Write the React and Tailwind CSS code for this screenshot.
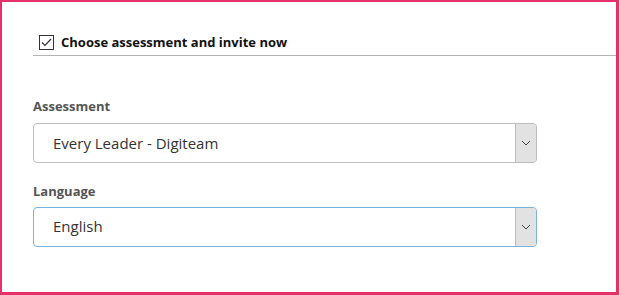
export default function App() {
  const Chevron = () => (
    <svg width="10" height="6" viewBox="0 0 10 6" fill="none">
      <path d="M1 1 L5 5 L9 1" stroke="#444" strokeWidth="1" />
    </svg>
  );
  const Select = ({ value, focused }) => (
    <div
      className={`flex h-[40px] w-[504px] rounded-[4px] border ${focused ? "border-[#7cb3dc]" : "border-[#bdbdbd]"} bg-white overflow-hidden`}
    >
      <div className="flex flex-1 items-center pl-[19px] text-[15px] text-[#333]">{value}</div>
      <div className="flex w-[21px] items-center justify-center border-l border-[#bdbdbd] bg-[#e2e2e2]">
        <Chevron />
      </div>
    </div>
  );
  return (
    <div
      className="h-[295px] w-[619px] border-l-2 border-t-2 border-r-[3px] border-b-[3px] border-[#e5306a] bg-white"
      style={{ fontFamily: '"Open Sans", "Segoe UI", sans-serif' }}
    >
      <div className="pl-[31px] pt-[31px]">
        <div className="flex items-center gap-[7px] border-b border-[#b4b4b4] pb-[2px] pl-[6px]">
          <div className="flex h-[15px] w-[15px] items-center justify-center border border-[#333] bg-white">
            <svg width="11" height="9" viewBox="0 0 11 9" fill="none">
              <path d="M1 4.5 L4 7.5 L10 1" stroke="#333" strokeWidth="1.2" />
            </svg>
          </div>
          <span className="text-[13px] font-bold text-[#111]">Choose assessment and invite now</span>
        </div>
        <div className="mt-[41px] text-[13px] font-bold text-[#555]">Assessment</div>
        <div className="mt-[7px]">
          <Select value="Every Leader - Digiteam" />
        </div>
        <div className="mt-[19px] text-[13px] font-bold text-[#555]">Language</div>
        <div className="mt-[5px]">
          <Select value="English" focused />
        </div>
      </div>
    </div>
  );
}
